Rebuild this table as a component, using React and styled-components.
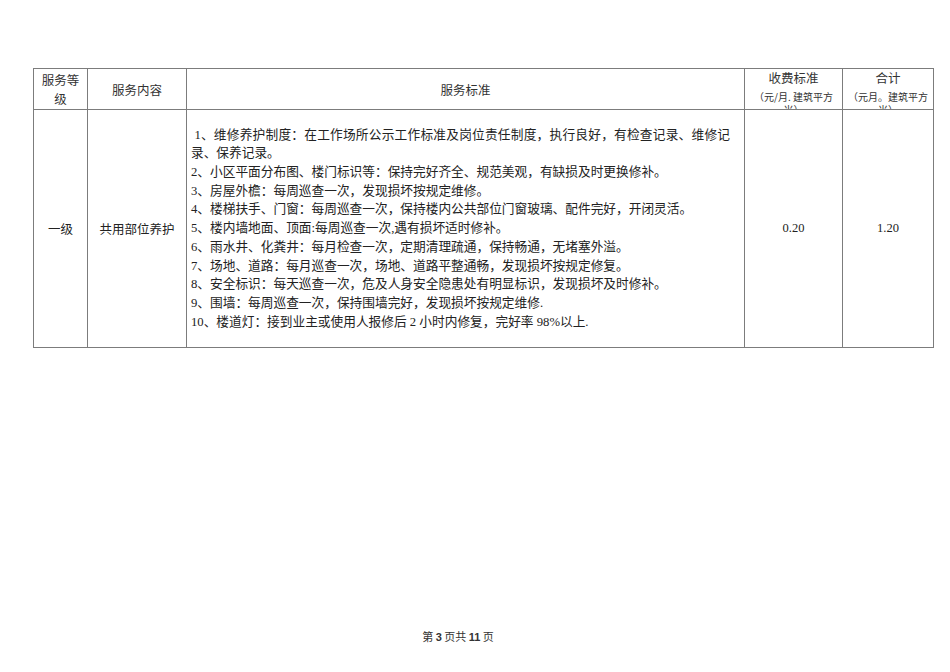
import styled, { createGlobalStyle } from 'styled-components';

const GlobalStyle = createGlobalStyle`
  html, body {
    margin: 0;
    background: #ffffff;
  }
  body {
    font-family: "Liberation Serif", "Noto Sans CJK SC", serif;
    color: #222222;
  }
`;

const COLS = [54, 99, 558, 98, 91];

const ITEMS = [
  '\u00a01、维修养护制度：在工作场所公示工作标准及岗位责任制度，执行良好，有检查记录、维修记录、保养记录。',
  '2、小区平面分布图、楼门标识等：保持完好齐全、规范美观，有缺损及时更换修补。',
  '3、房屋外檐：每周巡查一次，发现损坏按规定维修。',
  '4、楼梯扶手、门窗：每周巡查一次，保持楼内公共部位门窗玻璃、配件完好，开闭灵活。',
  '5、楼内墙地面、顶面:每周巡查一次,遇有损坏适时修补。',
  '6、雨水井、化粪井：每月检查一次，定期清理疏通，保持畅通，无堵塞外溢。',
  '7、场地、道路：每月巡查一次，场地、道路平整通畅，发现损坏按规定修复。',
  '8、安全标识：每天巡查一次，危及人身安全隐患处有明显标识，发现损坏及时修补。',
  '9、围墙：每周巡查一次，保持围墙完好，发现损坏按规定维修.',
  '10、楼道灯：接到业主或使用人报修后 2 小时内修复，完好率 98%以上.',
];

function App() {
  return (
    <Page>
      <GlobalStyle />
      <Sheet>
        <colgroup>
          {COLS.map((w, i) => (
            <col key={i} style={{ width: w }} />
          ))}
        </colgroup>
        <thead>
          <HeadRow>
            <HeadCell><Wrap>服务等级</Wrap></HeadCell>
            <HeadCell $light><Wrap>服务内容</Wrap></HeadCell>
            <HeadCell><Wrap>服务标准</Wrap></HeadCell>
            <HeadCell>
              <Stack>
                <Title>收费标准</Title>
                <Unit>（元/月. 建筑平方米）</Unit>
              </Stack>
            </HeadCell>
            <HeadCell $light>
              <Stack>
                <Title>合计</Title>
                <Unit>（元月。建筑平方米）</Unit>
              </Stack>
            </HeadCell>
          </HeadRow>
        </thead>
        <tbody>
          <BodyRow>
            <Cell>一级</Cell>
            <Cell $light>共用部位养护</Cell>
            <TextCell>
              {ITEMS.map((t) => (
                <Item key={t}>{t}</Item>
              ))}
            </TextCell>
            <Cell>0.20</Cell>
            <Cell $light>1.20</Cell>
          </BodyRow>
        </tbody>
      </Sheet>
      <Footer>
        第 <b>3</b> 页共 <b>11</b> 页
      </Footer>
    </Page>
  );
}

const Page = styled.div`
  width: 950px;
  height: 672px;
  box-sizing: border-box;
  padding: 68px 0 0 33px;
  display: flex;
  flex-direction: column;
`;

const Sheet = styled.table`
  width: 900px;
  table-layout: fixed;
  border-collapse: collapse;
  font-size: 12.5px;
`;

const HeadRow = styled.tr`
  height: 40px;
`;

const BodyRow = styled.tr`
  height: 238px;
`;

const HeadCell = styled.th`
  border: 1px solid #7c7c7c;
  border-left-color: ${({ $light }) => ($light ? '#b4b4b4' : '#7c7c7c')};
  font-weight: normal;
  text-align: center;
  vertical-align: middle;
  padding: 0 5px;
  height: 40px;
  line-height: 19px;
  color: #333333;
`;

const Wrap = styled.div`
  font-family: "Noto Sans CJK SC", sans-serif;
  font-size: 12.5px;
`;

const Stack = styled.div`
  height: 39px;
  overflow: hidden;
  display: flex;
  flex-direction: column;
  align-items: center;
`;

const Title = styled.div`
  font-family: "Noto Sans CJK SC", sans-serif;
  font-size: 12.5px;
  line-height: 16px;
`;

const Unit = styled.div`
  margin-top: 4px;
  font-family: "Noto Sans CJK SC", sans-serif;
  font-size: 10px;
  line-height: 13px;
  color: #333333;
`;

const Cell = styled.td`
  border: 1px solid #7c7c7c;
  border-left-color: ${({ $light }) => ($light ? '#b4b4b4' : '#7c7c7c')};
  text-align: center;
  vertical-align: middle;
  padding: 0 4px;
  font-family: "Liberation Serif", "Noto Sans CJK SC", serif;
  font-size: 12.5px;
`;

const TextCell = styled.td`
  border: 1px solid #7c7c7c;
  vertical-align: middle;
  padding: 0 14px 0 4px;
  font-family: "Liberation Serif", "Noto Sans CJK SC", serif;
  font-size: 12.7px;
  line-height: 18.7px;
`;

const Item = styled.div`
  text-align: justify;
  text-justify: inter-character;
`;

const Footer = styled.div`
  margin-top: 280px;
  width: 850px;
  text-align: center;
  font-family: "Noto Sans CJK SC", sans-serif;
  font-size: 11px;
  color: #333333;

  b {
    font-family: "Liberation Sans", sans-serif;
    font-weight: bold;
  }
`;

export default App;
